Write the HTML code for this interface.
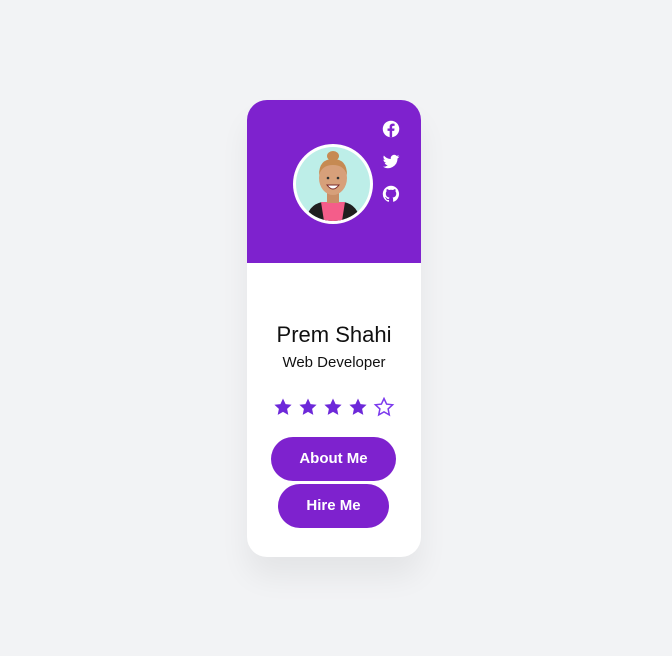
<!DOCTYPE html>
<html><head><style>
body{margin:0;width:672px;height:656px;background:#f2f3f5;font-family:"Liberation Sans",sans-serif;position:relative;overflow:hidden}
.card{position:absolute;left:247px;top:100px;width:174px;height:457px;background:#fff;border-radius:20px;overflow:hidden;box-shadow:0 20px 30px rgba(0,0,0,0.06)}
.hd{position:absolute;left:0;top:0;width:174px;height:163px;background:#7e22ce}
.av{position:absolute;left:46px;top:44px;width:80px;height:80px;border-radius:50%;background:#fff}
.av svg{position:absolute;left:3px;top:3px}
.ic{position:absolute;left:135px;width:18px;height:18px}
.name{position:absolute;left:0;width:174px;text-align:center;top:222px;font-size:22px;color:#111}
.job{position:absolute;left:0;width:174px;text-align:center;top:254px;font-size:15px;color:#111}
.btn{position:absolute;height:44px;border-radius:22px;background:#7e22ce;color:#fff;font-size:15px;font-weight:bold;text-align:center;line-height:44px}
</style></head><body>
<div class="card">
<div class="hd">
<svg class="ic" style="top:20px" viewBox="0 0 24 24"><circle cx="12" cy="12" r="11" fill="#fff"/><path d="M13.5 23v-8.5h2.8l.4-3.2h-3.2V9.3c0-.9.3-1.5 1.6-1.5h1.7V5c-.3 0-1.3-.1-2.5-.1-2.5 0-4.1 1.5-4.1 4.2v2.2H7.4v3.2h2.8V23z" fill="#7e22ce"/></svg>
<svg class="ic" style="top:53px" viewBox="0 0 24 24"><path fill="#fff" d="M23 4.6c-.8.4-1.7.6-2.6.7.9-.6 1.6-1.4 2-2.5-.9.5-1.9.9-2.9 1.1a4.5 4.5 0 0 0-7.7 4.1C8 7.8 4.7 6 2.5 3.3a4.5 4.5 0 0 0 1.4 6c-.7 0-1.4-.2-2-.6 0 2.2 1.6 4 3.6 4.4-.7.2-1.4.2-2 .1.6 1.8 2.2 3.1 4.2 3.1A9 9 0 0 1 1 18.2 12.8 12.8 0 0 0 20.7 7.4c.9-.6 1.7-1.5 2.3-2.4z"/></svg>
<svg class="ic" style="top:85px" viewBox="0 0 24 24"><path fill="#fff" d="M12 1a11 11 0 0 0-3.5 21.4c.6.1.8-.2.8-.5v-2c-3.1.7-3.7-1.3-3.7-1.3-.5-1.3-1.2-1.6-1.2-1.6-1-.7.1-.7.1-.7 1.1.1 1.7 1.1 1.7 1.1 1 1.7 2.6 1.2 3.2.9.1-.7.4-1.2.7-1.5-2.4-.3-5-1.2-5-5.4 0-1.2.4-2.2 1.1-2.9-.1-.3-.5-1.4.1-2.9 0 0 .9-.3 3 1.1a10.5 10.5 0 0 1 5.5 0c2.1-1.4 3-1.1 3-1.1.6 1.5.2 2.6.1 2.9.7.8 1.1 1.7 1.1 2.9 0 4.2-2.6 5.1-5 5.4.4.3.8 1 .8 2v3c0 .3.2.6.8.5A11 11 0 0 0 12 1z"/></svg>
<div class="av"><svg width="74" height="74" viewBox="0 0 74 74">
<defs><clipPath id="c"><circle cx="37" cy="37" r="37"/></clipPath></defs>
<g clip-path="url(#c)">
<rect width="74" height="74" fill="#bdeee8"/>
<path d="M10 74 Q12 58 26 55 L48 55 Q62 58 64 74z" fill="#1f1f1f"/>
<path d="M25 55 L49 55 L46 74 L28 74z" fill="#f45d8a"/>
<rect x="31" y="44" width="12" height="12" fill="#c98e66"/>
<ellipse cx="37" cy="31" rx="14" ry="17" fill="#d7a07a"/>
<path d="M23 28 Q23 12 37 12 Q51 12 51 28 Q48 18 37 18 Q26 18 23 28z" fill="#c68a52"/>
<ellipse cx="37" cy="9" rx="6" ry="5" fill="#c68a52"/>
<circle cx="32" cy="31" r="1.3" fill="#333"/><circle cx="42" cy="31" r="1.3" fill="#333"/>
<path d="M31 38 Q37 46 43 38z" fill="#fff" stroke="#7a2a2a" stroke-width="1"/>
</g></svg></div>
</div>
<div class="name">Prem Shahi</div>
<div class="job">Web Developer</div>
<svg style="position:absolute;left:26px;top:297px" width="124" height="22" viewBox="0 0 124 22">
<g fill="#6d28d9">
<path id="s" d="M10 1.5l2.6 5.6 6 .7-4.5 4.1 1.2 6L10 14.9 4.7 17.9l1.2-6L1.4 7.8l6-.7z"/>
<use href="#s" x="25"/><use href="#s" x="50"/><use href="#s" x="75"/>
</g>
<use href="#s" x="101" fill="none" stroke="#7c3aed" stroke-width="1.5"/>
</svg>
<div class="btn" style="left:24px;top:337px;width:125px">About Me</div>
<div class="btn" style="left:31px;top:384px;width:111px">Hire Me</div>
</div>
</body></html>
